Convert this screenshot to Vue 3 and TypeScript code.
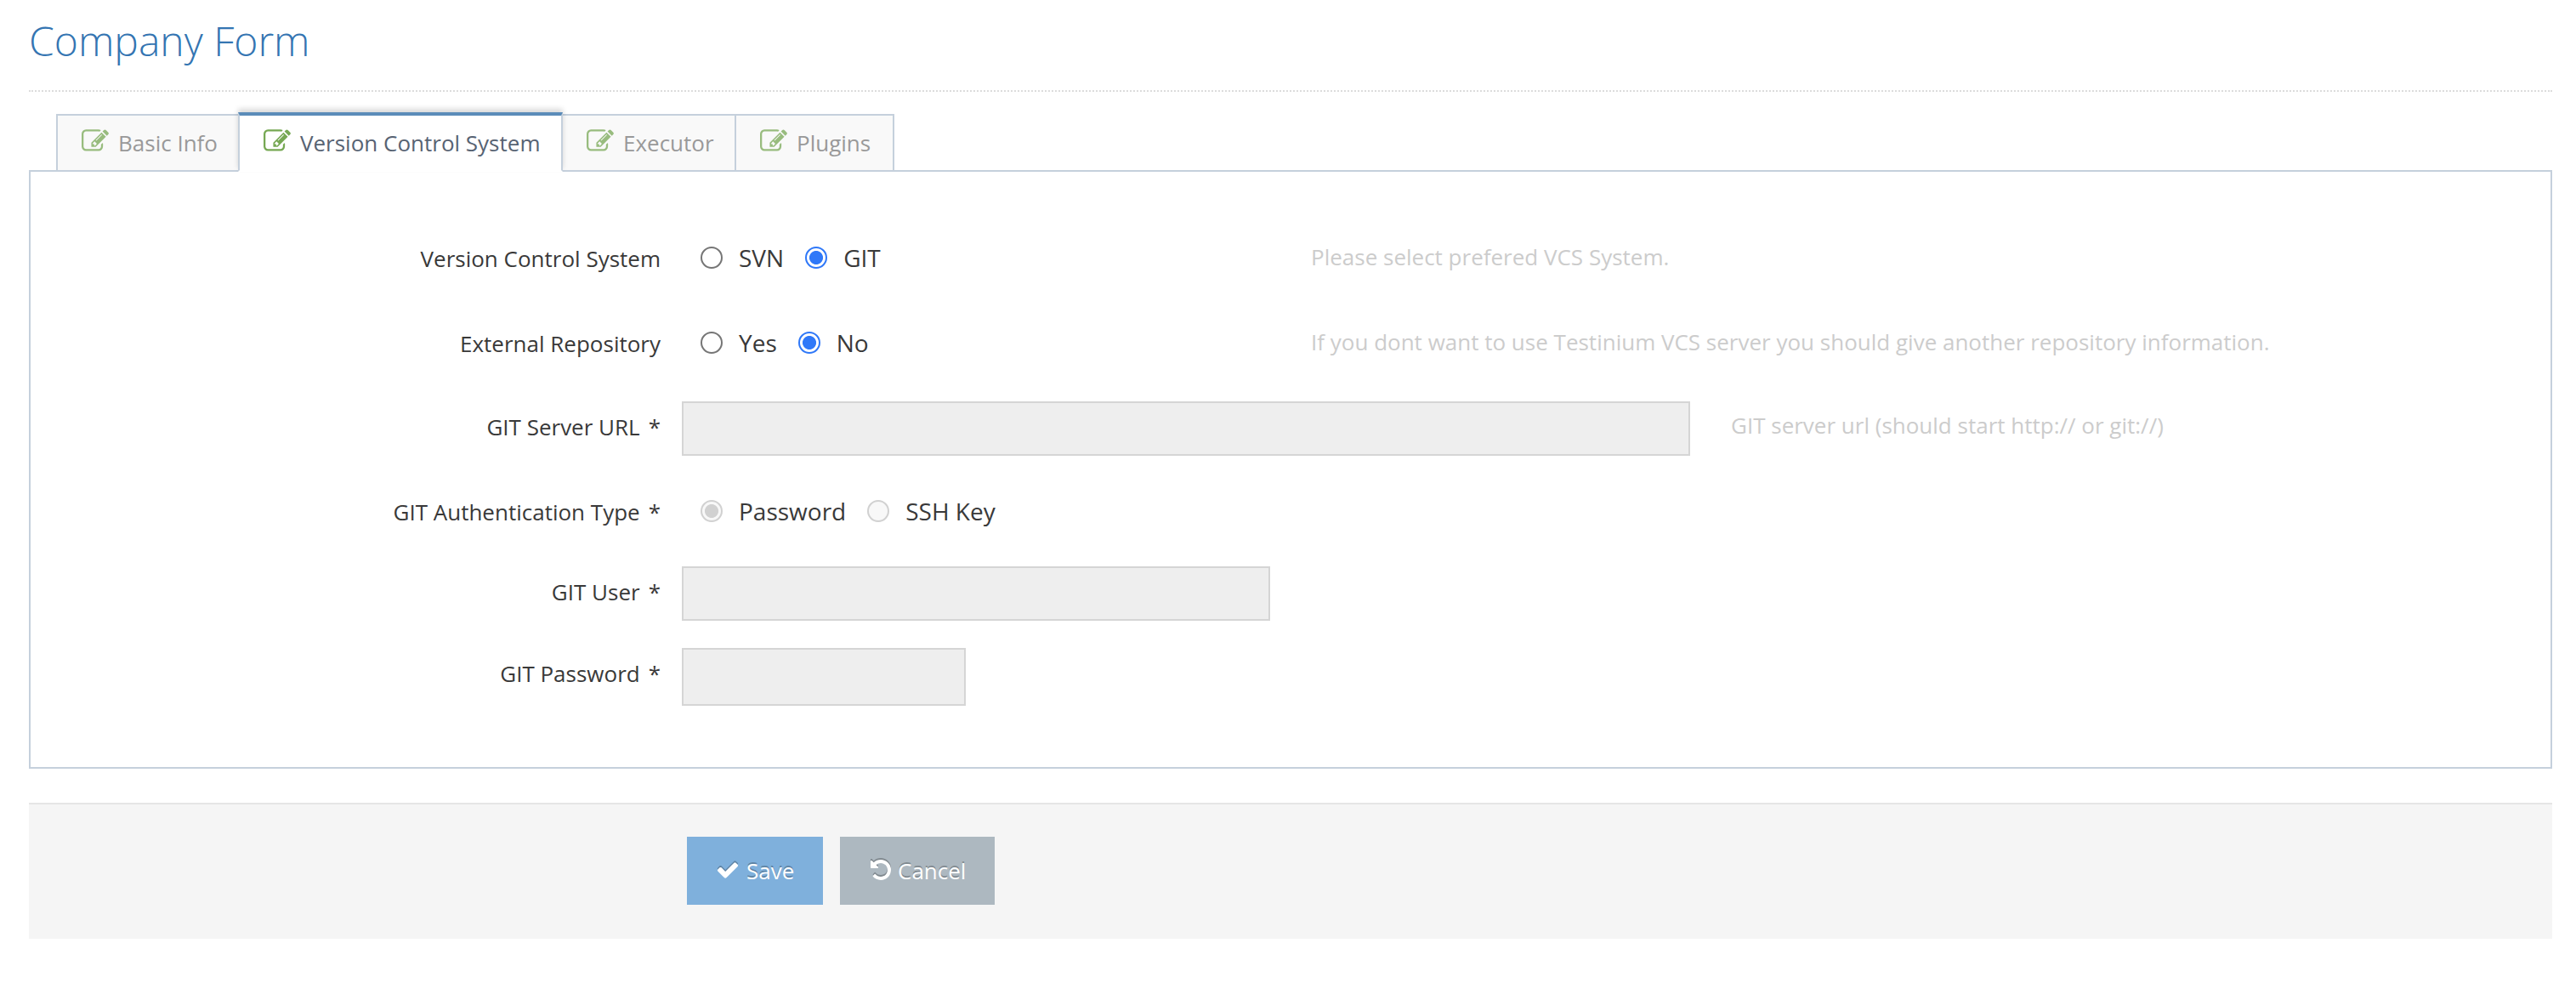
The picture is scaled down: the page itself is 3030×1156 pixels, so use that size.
<script setup lang="ts">
import { ref } from 'vue'

interface FormRow {
  id: string
  label: string
  required?: boolean
  height: number
  kind: 'radio' | 'text'
  options?: string[]
  width?: number
  fieldHeight?: number
  disabled?: boolean
  help?: string
}

const tabs = ['Basic Info', 'Version Control System', 'Executor', 'Plugins']
const activeTab = ref(1)

const rows: FormRow[] = [
  {
    id: 'vcs', label: 'Version Control System', height: 100, kind: 'radio',
    options: ['SVN', 'GIT'],
    help: 'Please select prefered VCS System.',
  },
  {
    id: 'external', label: 'External Repository', height: 88, kind: 'radio',
    options: ['Yes', 'No'],
    help: 'If you dont want to use Testinium VCS server you should give another repository information.',
  },
  {
    id: 'url', label: 'GIT Server URL', required: true, height: 110, kind: 'text',
    width: 1186, fieldHeight: 64, disabled: true,
    help: 'GIT server url (should start http:// or git://)',
  },
  {
    id: 'auth', label: 'GIT Authentication Type', required: true, height: 84, kind: 'radio',
    options: ['Password', 'SSH Key'], disabled: true,
  },
  {
    id: 'user', label: 'GIT User', required: true, height: 96, kind: 'text',
    width: 692, fieldHeight: 64, disabled: true,
  },
  {
    id: 'password', label: 'GIT Password', required: true, height: 68, kind: 'text',
    width: 334, fieldHeight: 68, disabled: true,
  },
]

const selected = ref<Record<string, string>>({ vcs: 'GIT', external: 'No', auth: 'Password' })
</script>

<template>
  <main class="page">
    <h1 class="title">Company Form</h1>

    <ul class="tabs">
      <li
        v-for="(tab, i) in tabs"
        :key="tab"
        class="tab"
        :class="{ active: i === activeTab }"
        @click="activeTab = i"
      >
        <svg class="edit" viewBox="0 0 1792 1792">
          <path d="M888 1184l116-116-152-152-116 116v56h96v96h56zm440-720q-16-16-33 1l-350 350q-17 17-1 33t33-1l350-350q17-17 1-33zm80 594v190q0 119-84.5 203.5t-203.5 84.5h-832q-119 0-203.5-84.5t-84.5-203.5v-832q0-119 84.5-203.5t203.5-84.5h832q63 0 117 25 15 7 18 23 3 17-9 29l-49 49q-14 14-32 8-23-6-45-6h-832q-66 0-113 47t-47 113v832q0 66 47 113t113 47h832q66 0 113-47t47-113v-126q0-13 9-22l64-64q15-15 35-7t20 29zm-96-738l288 288-672 672h-288v-288zm444 132l-92 92-288-288 92-92q28-28 68-28t68 28l152 152q28 28 28 68t-28 68z" />
        </svg>
        <span>{{ tab }}</span>
      </li>
    </ul>

    <section class="panel">
      <div
        v-for="row in rows"
        :key="row.id"
        class="row"
        :class="row.kind"
        :style="{ height: row.height + 'px' }"
      >
        <div class="label">{{ row.label }}<span v-if="row.required" class="star">*</span></div>
        <div v-if="row.kind === 'radio'" class="options">
          <label v-for="opt in row.options" :key="opt" class="option">
            <input
              v-model="selected[row.id]"
              type="radio"
              :name="row.id"
              :value="opt"
              :disabled="row.disabled"
            />
            <span>{{ opt }}</span>
          </label>
        </div>
        <input
          v-else
          class="field"
          :type="row.id === 'password' ? 'password' : 'text'"
          :disabled="row.disabled"
          :style="{ width: row.width + 'px', height: row.fieldHeight + 'px' }"
        />
        <div v-if="row.help" class="help">{{ row.help }}</div>
      </div>
    </section>

    <footer class="actions">
      <button class="btn save">
        <svg viewBox="0 0 1792 1792"><path d="M1671 566q0 40-28 68l-724 724-136 136q-28 28-68 28t-68-28l-136-136-362-362q-28-28-28-68t28-68l136-136q28-28 68-28t68 28l294 295 656-657q28-28 68-28t68 28l136 136q28 28 28 68z" /></svg>
        <span>Save</span>
      </button>
      <button class="btn cancel">
        <svg viewBox="0 0 1792 1792"><path d="M1664 896q0 156-61 298t-164 245-245 164-298 61q-172 0-327-72.5t-264-204.5q-7-10-6.5-22.5t8.5-20.5l137-138q10-9 25-9 16 2 23 12 73 95 179 147t225 52q104 0 198.5-40.5t163.5-109.5 109.5-163.5 40.5-198.5-40.5-198.5-109.5-163.5-163.5-109.5-198.5-40.5q-98 0-188 35.5t-160 101.5l137 138q31 30 14 69-17 40-59 40h-448q-26 0-45-19t-19-45v-448q0-42 40-59 39-17 69 14l130 129q107-101 244.5-156.5t284.5-55.5q156 0 298 61t245 164 164 245 61 298z" /></svg>
        <span>Cancel</span>
      </button>
    </footer>
  </main>
</template>

<style>
body {
  background: #fff;
}
</style>

<style scoped>
.page {
  box-sizing: border-box;
  height: 1156px;
  padding: 0 28px 0 34px;
  font-family: 'Open Sans', sans-serif;
  font-size: 26px;
  line-height: 40px;
  color: #393939;
}

.title {
  box-sizing: border-box;
  height: 108px;
  margin: 0;
  padding-top: 16px;
  border-bottom: 2px dotted #dcdcdc;
  font-size: 48px;
  font-weight: 320;
  line-height: 64px;
  color: #3475b2;
}

.tabs {
  display: flex;
  align-items: flex-end;
  height: 94px;
  margin: 0 0 -2px;
  padding: 0 0 0 32px;
  list-style: none;
  position: relative;
}

.tab {
  display: flex;
  align-items: flex-start;
  box-sizing: border-box;
  width: 216px;
  height: 68px;
  margin-right: -2px;
  padding: 12px 0 0 28px;
  border: 2px solid #c5d0dc;
  background: #f9f9f9;
  color: #999;
  white-space: nowrap;
}

.tab:nth-child(2) { width: 382px; }
.tab:nth-child(3) { width: 206px; }
.tab:nth-child(4) { width: 188px; }

.tab.active {
  height: 70px;
  border-top: 4px solid #5b8cb9;
  border-bottom-color: #fff;
  background: #fff;
  color: #576373;
  box-shadow: 0 -4px 6px 0 rgba(0, 0, 0, 0.15);
  z-index: 1;
}

.edit {
  width: 32px;
  height: 32px;
  margin: 2px 11px 0 0;
  fill: #76a853;
}

.tab:not(.active) .edit { fill: #98bc7e; }

.panel {
  box-sizing: border-box;
  height: 704px;
  padding-top: 82px;
  border: 2px solid #c5d0dc;
}

.row {
  display: flex;
  align-items: flex-start;
}

.label {
  width: 741px;
  margin-right: 25px;
  text-align: right;
}

.star { margin-left: 10px; }

.row.text .label { padding-top: 10px; }

.options {
  display: flex;
  width: 741px;
}

.option {
  display: flex;
  font-size: 28px;
}

.option:first-child { padding-left: 22px; }

.option + .option { margin-left: 25px; }

.option span { margin-top: -1px; }

.option input {
  appearance: none;
  box-sizing: border-box;
  width: 26px;
  height: 26px;
  margin: 6px 19px 0 0;
  border: 2px solid #767676;
  border-radius: 50%;
  background: #fff;
}

.option input:checked {
  border-color: #2f78f8;
  background: radial-gradient(circle, #2f78f8 7.6px, #fff 8.4px);
}

.option input:disabled {
  border-color: #d1d1d1;
  background: #f8f8f8;
}

.option input:disabled:checked {
  background: radial-gradient(circle, #d1d1d1 7.6px, #f8f8f8 8.4px);
}

.field {
  box-sizing: border-box;
  padding: 0 10px;
  border: 2px solid #d5d5d5;
  border-radius: 0;
  background: #eee;
}

.help {
  margin-top: -2px;
  color: #ccc;
}

.row.radio .help { margin-left: -1px; }

.row.text .help { margin: 8px 0 0 48px; }

.actions {
  display: flex;
  align-items: flex-start;
  box-sizing: border-box;
  height: 160px;
  margin-top: 40px;
  padding: 38px 0 0 774px;
  border-top: 2px solid #e5e5e5;
  background: #f5f5f5;
}

.btn {
  display: flex;
  align-items: flex-start;
  box-sizing: border-box;
  width: 160px;
  height: 80px;
  margin: 0 20px 0 0;
  padding: 20px 0 0 34px;
  border: 0;
  font: inherit;
  color: #fff;
  text-shadow: 0 -2px 0 rgba(0, 0, 0, 0.25);
}

.btn svg {
  width: 28px;
  height: 28px;
  margin: 5px 8px 0 0;
  overflow: visible;
  fill: #fff;
  filter: drop-shadow(0 -2px 0 rgba(0, 0, 0, 0.25));
}

.save { background: #7fb0dc; }

.cancel {
  width: 182px;
  background: #adb8c0;
}

.cancel svg { margin-right: 6px; }
</style>
